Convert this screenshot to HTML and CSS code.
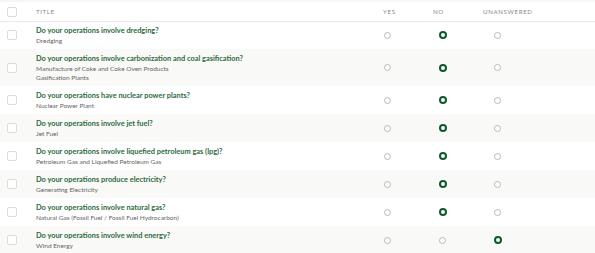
FILE: index.html
```html
<!DOCTYPE html>
<html lang="en">
<head>
    <meta charset="UTF-8">
    <title>Questions</title>
    <link rel="stylesheet" href="styles.css">
</head>
<body>
    <div class="table">
        <div class="row head">
            <div class="cell check"><span class="box"></span></div>
            <div class="cell">Title</div>
            <div class="cell">Yes</div>
            <div class="cell">No</div>
            <div class="cell">Unanswered</div>
        </div>

        <div class="row">
            <div class="cell check"><span class="box"></span></div>
            <div class="cell">
                <div class="q">Do your operations involve dredging?</div>
                <div class="sub">Dredging</div>
            </div>
            <div class="cell opt yes"><span class="radio"></span></div>
            <div class="cell opt no"><span class="radio on"></span></div>
            <div class="cell opt un"><span class="radio"></span></div>
        </div>

        <div class="row">
            <div class="cell check"><span class="box"></span></div>
            <div class="cell">
                <div class="q">Do your operations involve carbonization and coal gasification?</div>
                <div class="sub">Manufacture of Coke and Coke Oven Products</div>
                <div class="sub">Gasification Plants</div>
            </div>
            <div class="cell opt yes"><span class="radio"></span></div>
            <div class="cell opt no"><span class="radio on"></span></div>
            <div class="cell opt un"><span class="radio"></span></div>
        </div>

        <div class="row">
            <div class="cell check"><span class="box"></span></div>
            <div class="cell">
                <div class="q">Do your operations have nuclear power plants?</div>
                <div class="sub">Nuclear Power Plant</div>
            </div>
            <div class="cell opt yes"><span class="radio"></span></div>
            <div class="cell opt no"><span class="radio on"></span></div>
            <div class="cell opt un"><span class="radio"></span></div>
        </div>

        <div class="row">
            <div class="cell check"><span class="box"></span></div>
            <div class="cell">
                <div class="q">Do your operations involve jet fuel?</div>
                <div class="sub">Jet Fuel</div>
            </div>
            <div class="cell opt yes"><span class="radio"></span></div>
            <div class="cell opt no"><span class="radio on"></span></div>
            <div class="cell opt un"><span class="radio"></span></div>
        </div>

        <div class="row">
            <div class="cell check"><span class="box"></span></div>
            <div class="cell">
                <div class="q">Do your operations involve liquefied petroleum gas (lpg)?</div>
                <div class="sub">Petroleum Gas and Liquefied Petroleum Gas</div>
            </div>
            <div class="cell opt yes"><span class="radio"></span></div>
            <div class="cell opt no"><span class="radio on"></span></div>
            <div class="cell opt un"><span class="radio"></span></div>
        </div>

        <div class="row">
            <div class="cell check"><span class="box"></span></div>
            <div class="cell">
                <div class="q">Do your operations produce electricity?</div>
                <div class="sub">Generating Electricity</div>
            </div>
            <div class="cell opt yes"><span class="radio"></span></div>
            <div class="cell opt no"><span class="radio on"></span></div>
            <div class="cell opt un"><span class="radio"></span></div>
        </div>

        <div class="row">
            <div class="cell check"><span class="box"></span></div>
            <div class="cell">
                <div class="q">Do your operations involve natural gas?</div>
                <div class="sub">Natural Gas (Fossil Fuel / Fossil Fuel Hydrocarbon)</div>
            </div>
            <div class="cell opt yes"><span class="radio"></span></div>
            <div class="cell opt no"><span class="radio on"></span></div>
            <div class="cell opt un"><span class="radio"></span></div>
        </div>

        <div class="row">
            <div class="cell check"><span class="box"></span></div>
            <div class="cell">
                <div class="q">Do your operations involve wind energy?</div>
                <div class="sub">Wind Energy</div>
            </div>
            <div class="cell opt yes"><span class="radio"></span></div>
            <div class="cell opt no"><span class="radio"></span></div>
            <div class="cell opt un"><span class="radio on"></span></div>
        </div>
    </div>
</body>
</html>
```

FILE: styles.css
```css
body {
    margin: 0;
    background-color: #f6f6f4;
    font-family: Lato, "Liberation Sans", sans-serif;
}
.table {
    margin-top: 2px;
    background: white;
}
.row {
    display: grid;
    grid-template-columns: 36px 347px 50px 50px 1fr;
    align-items: center;
}
.row:nth-child(odd) {
    background-color: #f9f9f7;
}
.row .cell {
    padding: 4px 0;
}
.row.head {
    height: 19px;
    background-color: white;
    box-shadow: 0 1px 1px rgba(0, 0, 0, 0.08);
    position: relative;
    font-size: 6.2px;
    letter-spacing: 0.6px;
    text-transform: uppercase;
    color: #8a8a8a;
}
.head .cell {
    padding: 0;
}
.check {
    display: flex;
    padding-left: 7px !important;
}
.box {
    width: 8px;
    height: 8px;
    border: 1px solid #dcdcdc;
    border-radius: 2px;
    background: white;
}
.q {
    font-size: 7.4px;
    line-height: 11px;
    color: #2c6a40;
    font-weight: 700;
}
.sub {
    font-size: 6.5px;
    line-height: 9px;
    color: #666;
}
.opt {
    display: flex;
}
.yes {
    padding-left: 1px !important;
}
.no {
    padding-left: 6px !important;
}
.un {
    padding-left: 11px !important;
}
.radio {
    box-sizing: border-box;
    width: 7px;
    height: 7px;
    border: 1px solid #b8b8b8;
    border-radius: 50%;
    background: white;
}
.radio.on {
    width: 8px;
    height: 8px;
    border: 2.5px solid #0c5a2b;
    margin-left: -0.5px;
}
```
